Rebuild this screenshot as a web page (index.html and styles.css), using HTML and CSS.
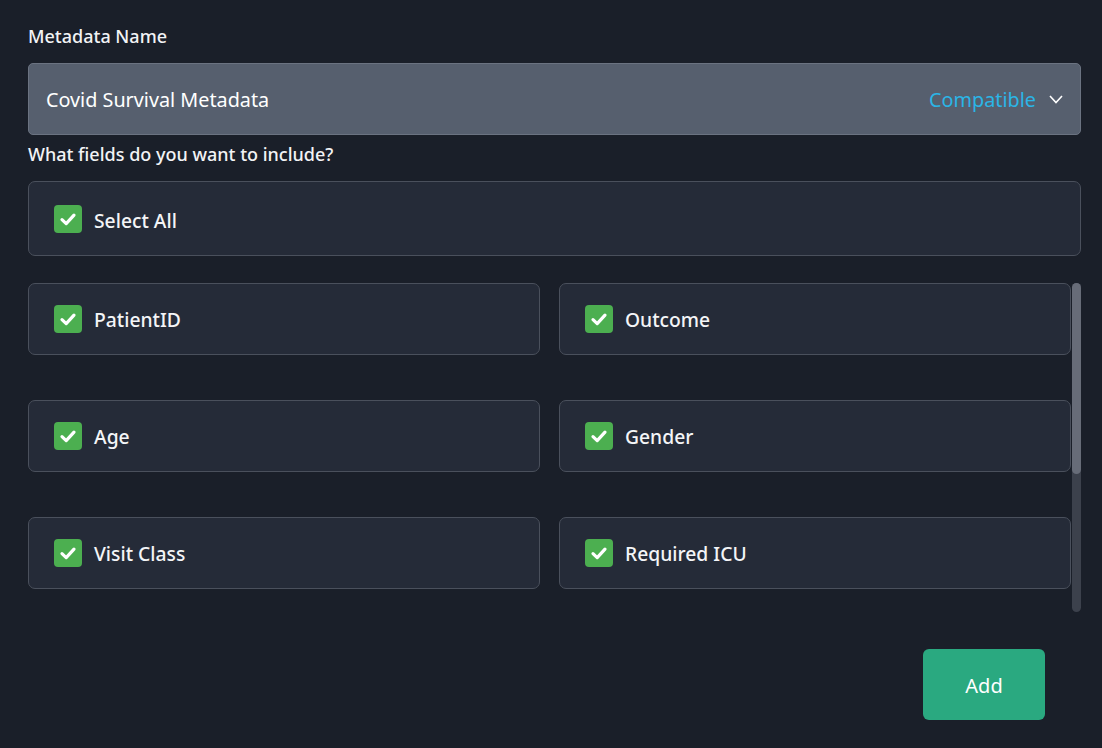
FILE: index.html
```html
<!DOCTYPE html>
<html lang="en">
<head>
<meta charset="utf-8">
<title>Metadata</title>
<link rel="stylesheet" href="styles.css">
</head>
<body>
<div class="page">
  <div class="label label-name">Metadata Name</div>
  <div class="select">
    <span class="select-value">Covid Survival Metadata</span>
    <span class="select-right">
      <span class="compatible">Compatible</span>
      <svg class="chevron" width="14" height="10" viewBox="0 0 14 10"><path d="M1 2 L7 8.5 L13 2" fill="none" stroke="#ffffff" stroke-width="1.6" stroke-linejoin="miter"/></svg>
    </span>
  </div>
  <div class="label label-fields">What fields do you want to include?</div>
  <div class="card card-all">
    <span class="check"><svg width="28" height="28" viewBox="0 0 28 28"><path d="M8 14.6 L12.2 18.6 L20 10.2" fill="none" stroke="#ffffff" stroke-width="3.2" stroke-linecap="round" stroke-linejoin="round"/></svg></span>
    <span class="card-text">Select All</span>
  </div>
  <div class="scroller">
    <div class="grid">
      <div class="card"><span class="check"><svg width="28" height="28" viewBox="0 0 28 28"><path d="M8 14.6 L12.2 18.6 L20 10.2" fill="none" stroke="#ffffff" stroke-width="3.2" stroke-linecap="round" stroke-linejoin="round"/></svg></span><span class="card-text">PatientID</span></div>
      <div class="card"><span class="check"><svg width="28" height="28" viewBox="0 0 28 28"><path d="M8 14.6 L12.2 18.6 L20 10.2" fill="none" stroke="#ffffff" stroke-width="3.2" stroke-linecap="round" stroke-linejoin="round"/></svg></span><span class="card-text">Outcome</span></div>
      <div class="card"><span class="check"><svg width="28" height="28" viewBox="0 0 28 28"><path d="M8 14.6 L12.2 18.6 L20 10.2" fill="none" stroke="#ffffff" stroke-width="3.2" stroke-linecap="round" stroke-linejoin="round"/></svg></span><span class="card-text">Age</span></div>
      <div class="card"><span class="check"><svg width="28" height="28" viewBox="0 0 28 28"><path d="M8 14.6 L12.2 18.6 L20 10.2" fill="none" stroke="#ffffff" stroke-width="3.2" stroke-linecap="round" stroke-linejoin="round"/></svg></span><span class="card-text">Gender</span></div>
      <div class="card"><span class="check"><svg width="28" height="28" viewBox="0 0 28 28"><path d="M8 14.6 L12.2 18.6 L20 10.2" fill="none" stroke="#ffffff" stroke-width="3.2" stroke-linecap="round" stroke-linejoin="round"/></svg></span><span class="card-text">Visit Class</span></div>
      <div class="card"><span class="check"><svg width="28" height="28" viewBox="0 0 28 28"><path d="M8 14.6 L12.2 18.6 L20 10.2" fill="none" stroke="#ffffff" stroke-width="3.2" stroke-linecap="round" stroke-linejoin="round"/></svg></span><span class="card-text">Required ICU</span></div>
    </div>
    <div class="scrollbar"><div class="thumb"></div></div>
  </div>
  <div class="actions">
    <button class="btn-add">Add</button>
  </div>
</div>
</body>
</html>
```

FILE: styles.css
```css
* { box-sizing: border-box; }
html, body {
  margin: 0;
  padding: 0;
  background: #1a1f29;
  width: 1102px;
  height: 748px;
  overflow: hidden;
}
body {
  font-family: "Noto Sans", "Open Sans", sans-serif;
  color: #f2f3f5;
}
.page {
  padding: 23px 21px 0 28px;
  display: flex;
  flex-direction: column;
}
.label {
  font-size: 18px;
  font-weight: 500;
  line-height: 26px;
  color: #f2f3f5;
}
.label-name { margin-bottom: 14px; }
.label-fields { margin-top: 6px; margin-bottom: 14px; }
.select {
  height: 72px;
  background: #565f6e;
  border: 1px solid #6b7381;
  border-radius: 5px;
  display: flex;
  align-items: center;
  justify-content: space-between;
  padding: 0 17px 0 17px;
}
.select-value {
  font-size: 19.8px;
  color: #ffffff;
}
.select-right {
  display: flex;
  align-items: center;
  gap: 13px;
}
.compatible {
  font-size: 19.8px;
  color: #2bb5e6;
}
.chevron { display: block; margin-top: -1px; }
.card {
  height: 72px;
  background: #252b38;
  border: 1px solid #4a505c;
  border-radius: 7px;
  display: flex;
  align-items: center;
  padding-left: 25px;
  gap: 12px;
}
.card-all { height: 75px; margin-bottom: 27px; }
.card-all .card-text { padding-top: 3px; }
.check {
  width: 28px;
  height: 28px;
  border-radius: 4px;
  background: #4caf50;
  display: block;
  flex: none;
}
.check svg { display: block; }
.card-text {
  font-size: 19.3px;
  font-weight: 500;
  color: #f4f5f7;
}
.scroller {
  height: 329px;
  display: flex;
  gap: 1px;
  overflow: hidden;
}
.grid {
  flex: 1;
  display: grid;
  grid-template-columns: 1fr 1fr;
  grid-auto-rows: 72px;
  column-gap: 19px;
  row-gap: 45px;
  align-content: start;
}
.scrollbar {
  width: 9px;
  flex: none;
  background: #3c414c;
  border-radius: 5px;
}
.thumb {
  height: 191px;
  background: #676c78;
  border-radius: 5px;
}
.actions {
  display: flex;
  justify-content: flex-end;
  padding-top: 37px;
  padding-right: 36px;
}
.btn-add {
  width: 122px;
  height: 71px;
  background: #2aa980;
  border: none;
  border-radius: 6px;
  font-family: "Noto Sans", "Open Sans", sans-serif;
  font-size: 20px;
  color: #ffffff;
  padding: 2px 0 0 0;
}
```
